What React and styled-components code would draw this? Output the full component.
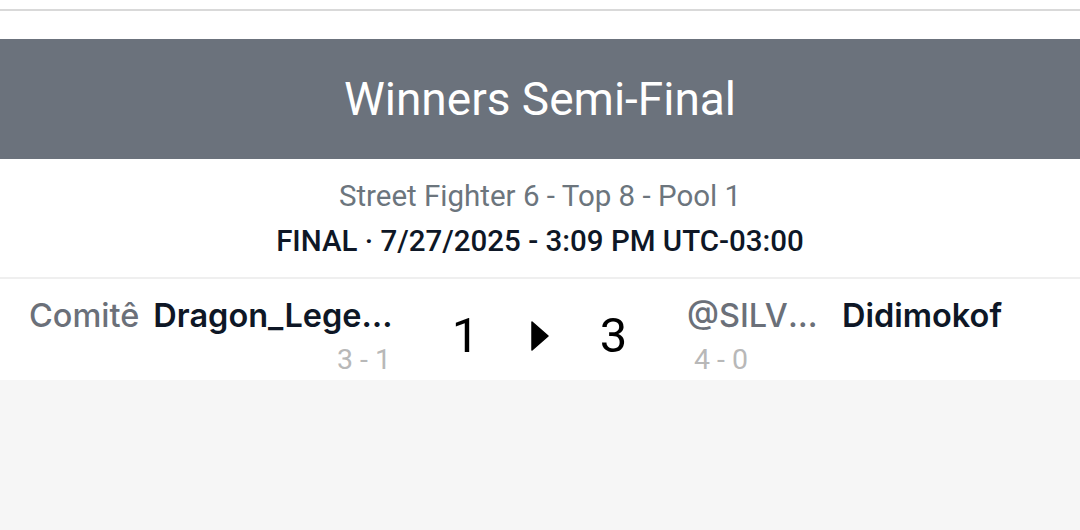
import React from "react";
import styled, { createGlobalStyle } from "styled-components";

const GlobalStyle = createGlobalStyle`
  html, body {
    margin: 0;
    padding: 0;
    background: #f6f6f6;
  }
  body {
    font-family: Roboto, "Noto Sans", sans-serif;
  }
`;

const Page = styled.div`
  width: 1080px;
  min-height: 530px;
  background: #f6f6f6;
  display: flex;
  flex-direction: column;
`;

const TopStrip = styled.div`
  height: 39px;
  background: #fff;
  box-sizing: border-box;
  padding-top: 9px;
`;

const Rule = styled.div`
  height: 2px;
  background: #d9d9d9;
`;

const Banner = styled.div`
  height: 120px;
  background: #6b727c;
  display: flex;
  align-items: center;
  justify-content: center;
  color: #fff;
  font-size: 46px;
  font-weight: 400;
  box-sizing: border-box;
`;

const Info = styled.div`
  background: #fff;
  display: flex;
  flex-direction: column;
  align-items: center;
  padding: 20px 0 19px;
  border-bottom: 2px solid #efefef;
  gap: 11px;
`;

const EventName = styled.div`
  font-size: 29.5px;
  color: #6c757d;
  line-height: 34px;
`;

const Status = styled.div`
  font-size: 29.5px;
  font-weight: 500;
  color: #0e1726;
  line-height: 34px;
`;

const MatchRow = styled.div`
  background: #fff;
  display: grid;
  grid-template-columns: 373px 275px 1fr;
  align-items: start;
  padding: 0 29px;
  height: 101px;
`;

const Side = styled.div`
  display: flex;
  flex-direction: column;
  align-items: ${(p) => (p.$right ? "flex-start" : "flex-end")};
  min-width: 0;
  padding-top: 18px;
  padding-left: ${(p) => (p.$right ? "10px" : "0")};
`;

const NameLine = styled.div`
  display: flex;
  align-items: baseline;
  width: 100%;
  min-width: 0;
  font-family: Inter, "Noto Sans", sans-serif;
  font-size: 32.5px;
  line-height: 38px;
  white-space: nowrap;
`;

const Prefix = styled.span`
  color: #6b7079;
  font-weight: 500;
  flex-shrink: 0;
  overflow: hidden;
  text-overflow: ellipsis;
  max-width: ${(p) => p.$max || "none"};
  margin-right: ${(p) => p.$gap || "14px"};
`;

const Name = styled.span`
  color: #0e1726;
  font-weight: 600;
  flex: 1;
  min-width: 0;
  overflow: hidden;
  text-overflow: ellipsis;
`;

const Record = styled.div`
  font-size: 28.5px;
  color: #b8b8b8;
  line-height: 32px;
  margin-top: 9px;
  padding-left: ${(p) => (p.$right ? "7px" : "0")};
  padding-right: ${(p) => (p.$right ? "0" : "11px")};
`;

const Scores = styled.div`
  display: flex;
  align-items: center;
  justify-content: center;
  gap: 41px;
  padding-top: 29px;
`;

const Score = styled.span`
  width: 48px;
  text-align: center;
  font-size: 49px;
  color: #000;
  line-height: 56px;
`;

const Arrow = styled.svg`
  width: 18px;
  height: 32px;
  display: block;
`;

function Player({ prefix, name, record, right, prefixMax, gap }) {
  return (
    <Side $right={right}>
      <NameLine>
        <Prefix $max={prefixMax} $gap={gap}>
          {prefix}
        </Prefix>
        <Name>{name}</Name>
      </NameLine>
      <Record $right={right}>{record}</Record>
    </Side>
  );
}

export default function App() {
  return (
    <Page>
      <GlobalStyle />
      <TopStrip>
        <Rule />
      </TopStrip>
      <Banner>Winners Semi-Final</Banner>
      <Info>
        <EventName>Street Fighter 6 - Top 8 - Pool 1</EventName>
        <Status>FINAL · 7/27/2025 - 3:09 PM UTC-03:00</Status>
      </Info>
      <MatchRow>
        <Player prefix="Comitê" name="Dragon_Legend_BR" record="3 - 1" />
        <Scores>
          <Score>1</Score>
          <Arrow viewBox="0 0 18 32">
            <path d="M1 2 L17 16 L1 30 Z" fill="#000" strokeLinejoin="round" stroke="#000" strokeWidth="1.5" />
          </Arrow>
          <Score>3</Score>
        </Scores>
        <Player
          right
          prefix="@SILVERWOLF"
          prefixMax="136px"
          gap="19px"
          name="Didimokof"
          record="4 - 0"
        />
      </MatchRow>
    </Page>
  );
}
